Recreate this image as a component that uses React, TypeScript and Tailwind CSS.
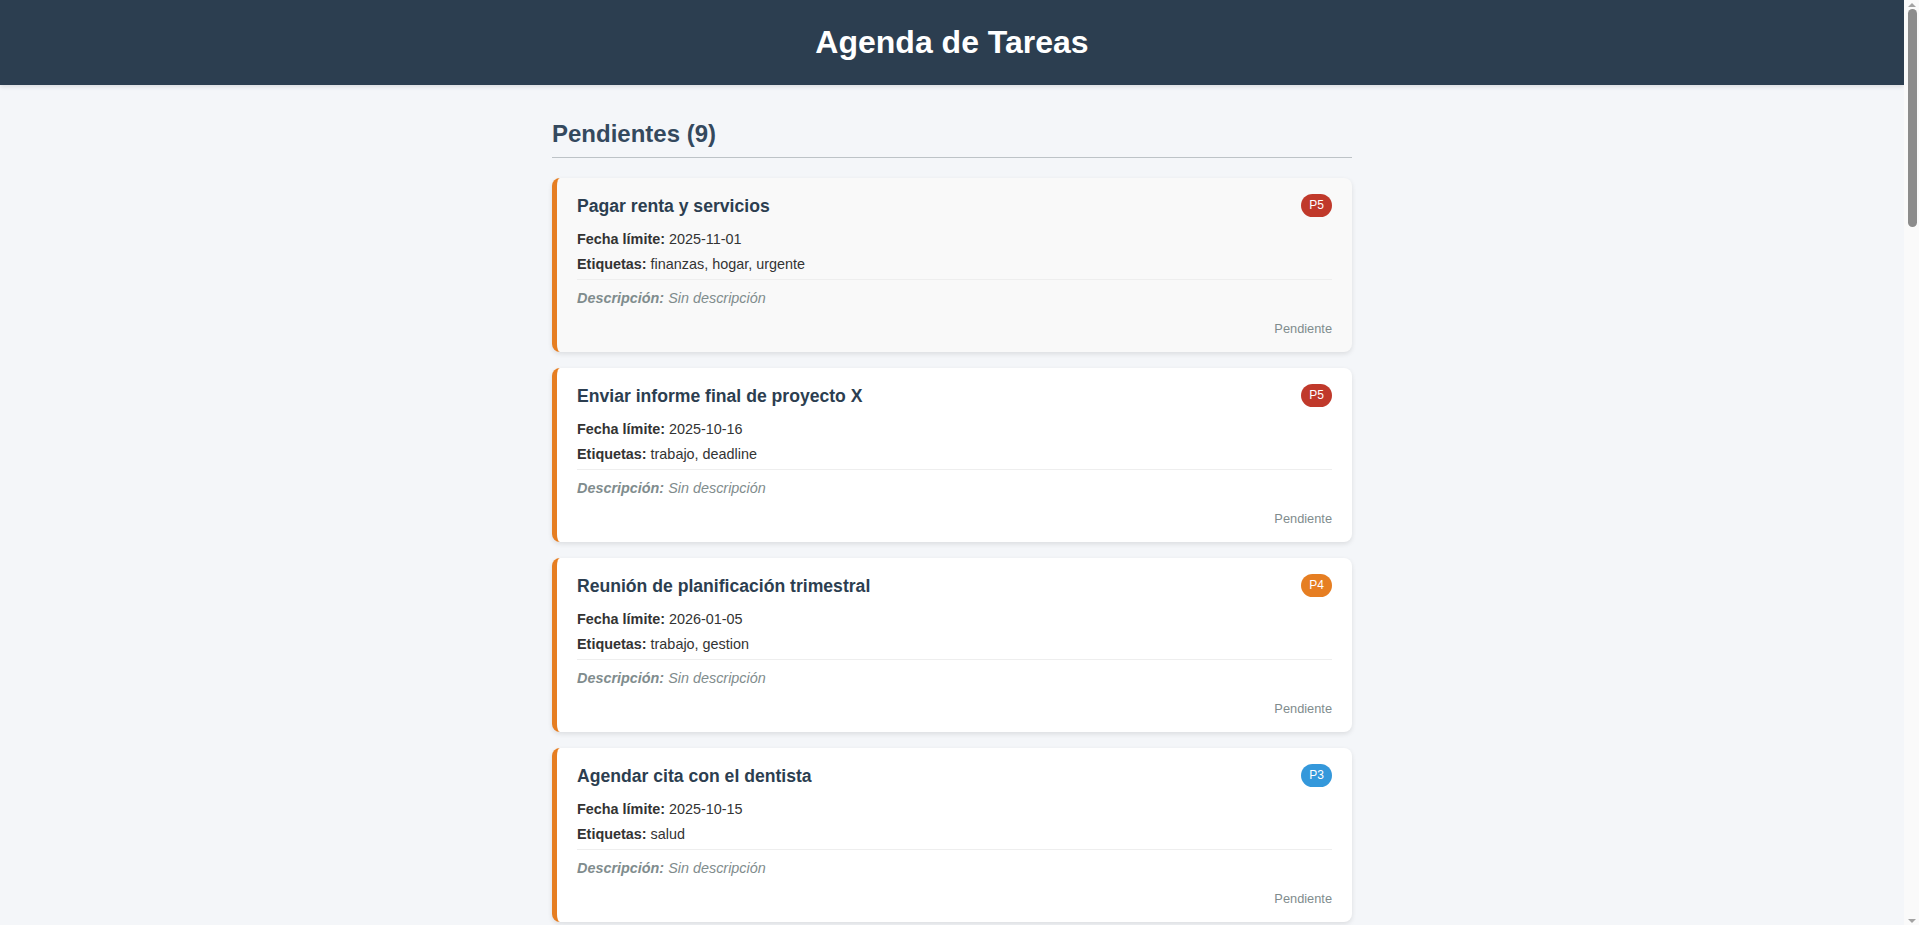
type Task = {
  id: number;
  title: string;
  due: string;
  tags: string[];
  priority: number;
};

const tasks: Task[] = [
  { id: 1, title: "Pagar renta y servicios", due: "2025-11-01", tags: ["finanzas", "hogar", "urgente"], priority: 5 },
  { id: 2, title: "Enviar informe final de proyecto X", due: "2025-10-16", tags: ["trabajo", "deadline"], priority: 5 },
  { id: 3, title: "Reunión de planificación trimestral", due: "2026-01-05", tags: ["trabajo", "gestion"], priority: 4 },
  { id: 4, title: "Agendar cita con el dentista", due: "2025-10-15", tags: ["salud"], priority: 3 },
  { id: 5, title: "Renovar licencia de conducir", due: "2025-12-10", tags: ["tramites"], priority: 3 },
  { id: 6, title: "Comprar regalos de cumpleaños", due: "2025-11-20", tags: ["personal", "compras"], priority: 2 },
  { id: 7, title: "Organizar el garaje", due: "2025-12-01", tags: ["hogar"], priority: 2 },
  { id: 8, title: "Leer libro pendiente", due: "2026-02-01", tags: ["personal", "ocio"], priority: 1 },
  { id: 9, title: "Actualizar currículum", due: "2026-01-20", tags: ["trabajo", "personal"], priority: 1 },
];

const badgeColor: Record<number, string> = {
  5: "bg-[#c0392b]",
  4: "bg-[#e67e22]",
  3: "bg-[#3498db]",
  2: "bg-[#27ae60]",
  1: "bg-[#95a5a6]",
};

const TaskCard = ({ task, hovered }: { task: Task; hovered?: boolean }) => (
  <div
    className={`rounded-lg border-l-[5px] border-[#e67e22] px-5 pt-4 pb-4 shadow-[0_2px_5px_rgba(0,0,0,0.1)] ${
      hovered ? "bg-[#f9f9f9]" : "bg-white"
    }`}
  >
    <div className="flex items-center justify-between">
      <h3 className="text-[17.6px] leading-5 font-bold text-[#2c3e50]">{task.title}</h3>
      <span
        className={`rounded-full px-2 py-1 text-xs leading-[15px] text-white ${badgeColor[task.priority]}`}
      >
        P{task.priority}
      </span>
    </div>
    <p className="mt-3 text-[14.4px] leading-5 text-[#333]">
      <strong>Fecha límite:</strong> {task.due}
    </p>
    <p className="mt-[5px] text-[14.4px] leading-5 text-[#333]">
      <strong>Etiquetas:</strong> {task.tags.join(", ")}
    </p>
    <p className="mt-[5px] border-t border-[#eee] pt-2 text-[14.4px] italic leading-5 text-[#7f8c8d]">
      <strong>Descripción:</strong> Sin descripción
    </p>
    <div className="mt-[13px] text-right text-[12.8px] leading-[15px] text-[#7f8c8d]">Pendiente</div>
  </div>
);

const ScrollBar = () => (
  <div className="sticky top-0 flex h-screen w-[15px] shrink-0 flex-col bg-[#fafafa]">
    <div className="flex h-[9px] items-center justify-center">
      <div className="h-0 w-0 border-x-[4px] border-b-[4px] border-x-transparent border-b-[#a3a3a3]" />
    </div>
    <div className="ml-1 h-[218px] w-[9px] rounded-full bg-[#8c8c8c]" />
    <div className="flex-1" />
    <div className="flex h-[9px] items-center justify-center">
      <div className="h-0 w-0 border-x-[4px] border-t-[4px] border-x-transparent border-t-[#a3a3a3]" />
    </div>
  </div>
);

export default function App() {
  return (
    <div className="flex bg-[#f4f6f9] font-['Liberation_Sans',Arial,sans-serif]">
      <div className="min-h-screen min-w-0 flex-1">
        <header className="bg-[#2c3e50] py-6 text-center shadow-[0_2px_4px_rgba(0,0,0,0.1)]">
          <h1 className="text-[32px] leading-[37px] font-bold text-white">Agenda de Tareas</h1>
        </header>
        <main className="mx-auto max-w-[800px] pt-[35px] pb-10">
          <h2 className="border-b border-[#bdc3c7] pb-[9px] text-2xl leading-7 font-bold text-[#34495e]">
            Pendientes ({tasks.length})
          </h2>
          <div className="mt-5 flex flex-col gap-4">
            {tasks.map((task, i) => (
              <TaskCard key={task.id} task={task} hovered={i === 0} />
            ))}
          </div>
        </main>
      </div>
      <ScrollBar />
    </div>
  );
}
